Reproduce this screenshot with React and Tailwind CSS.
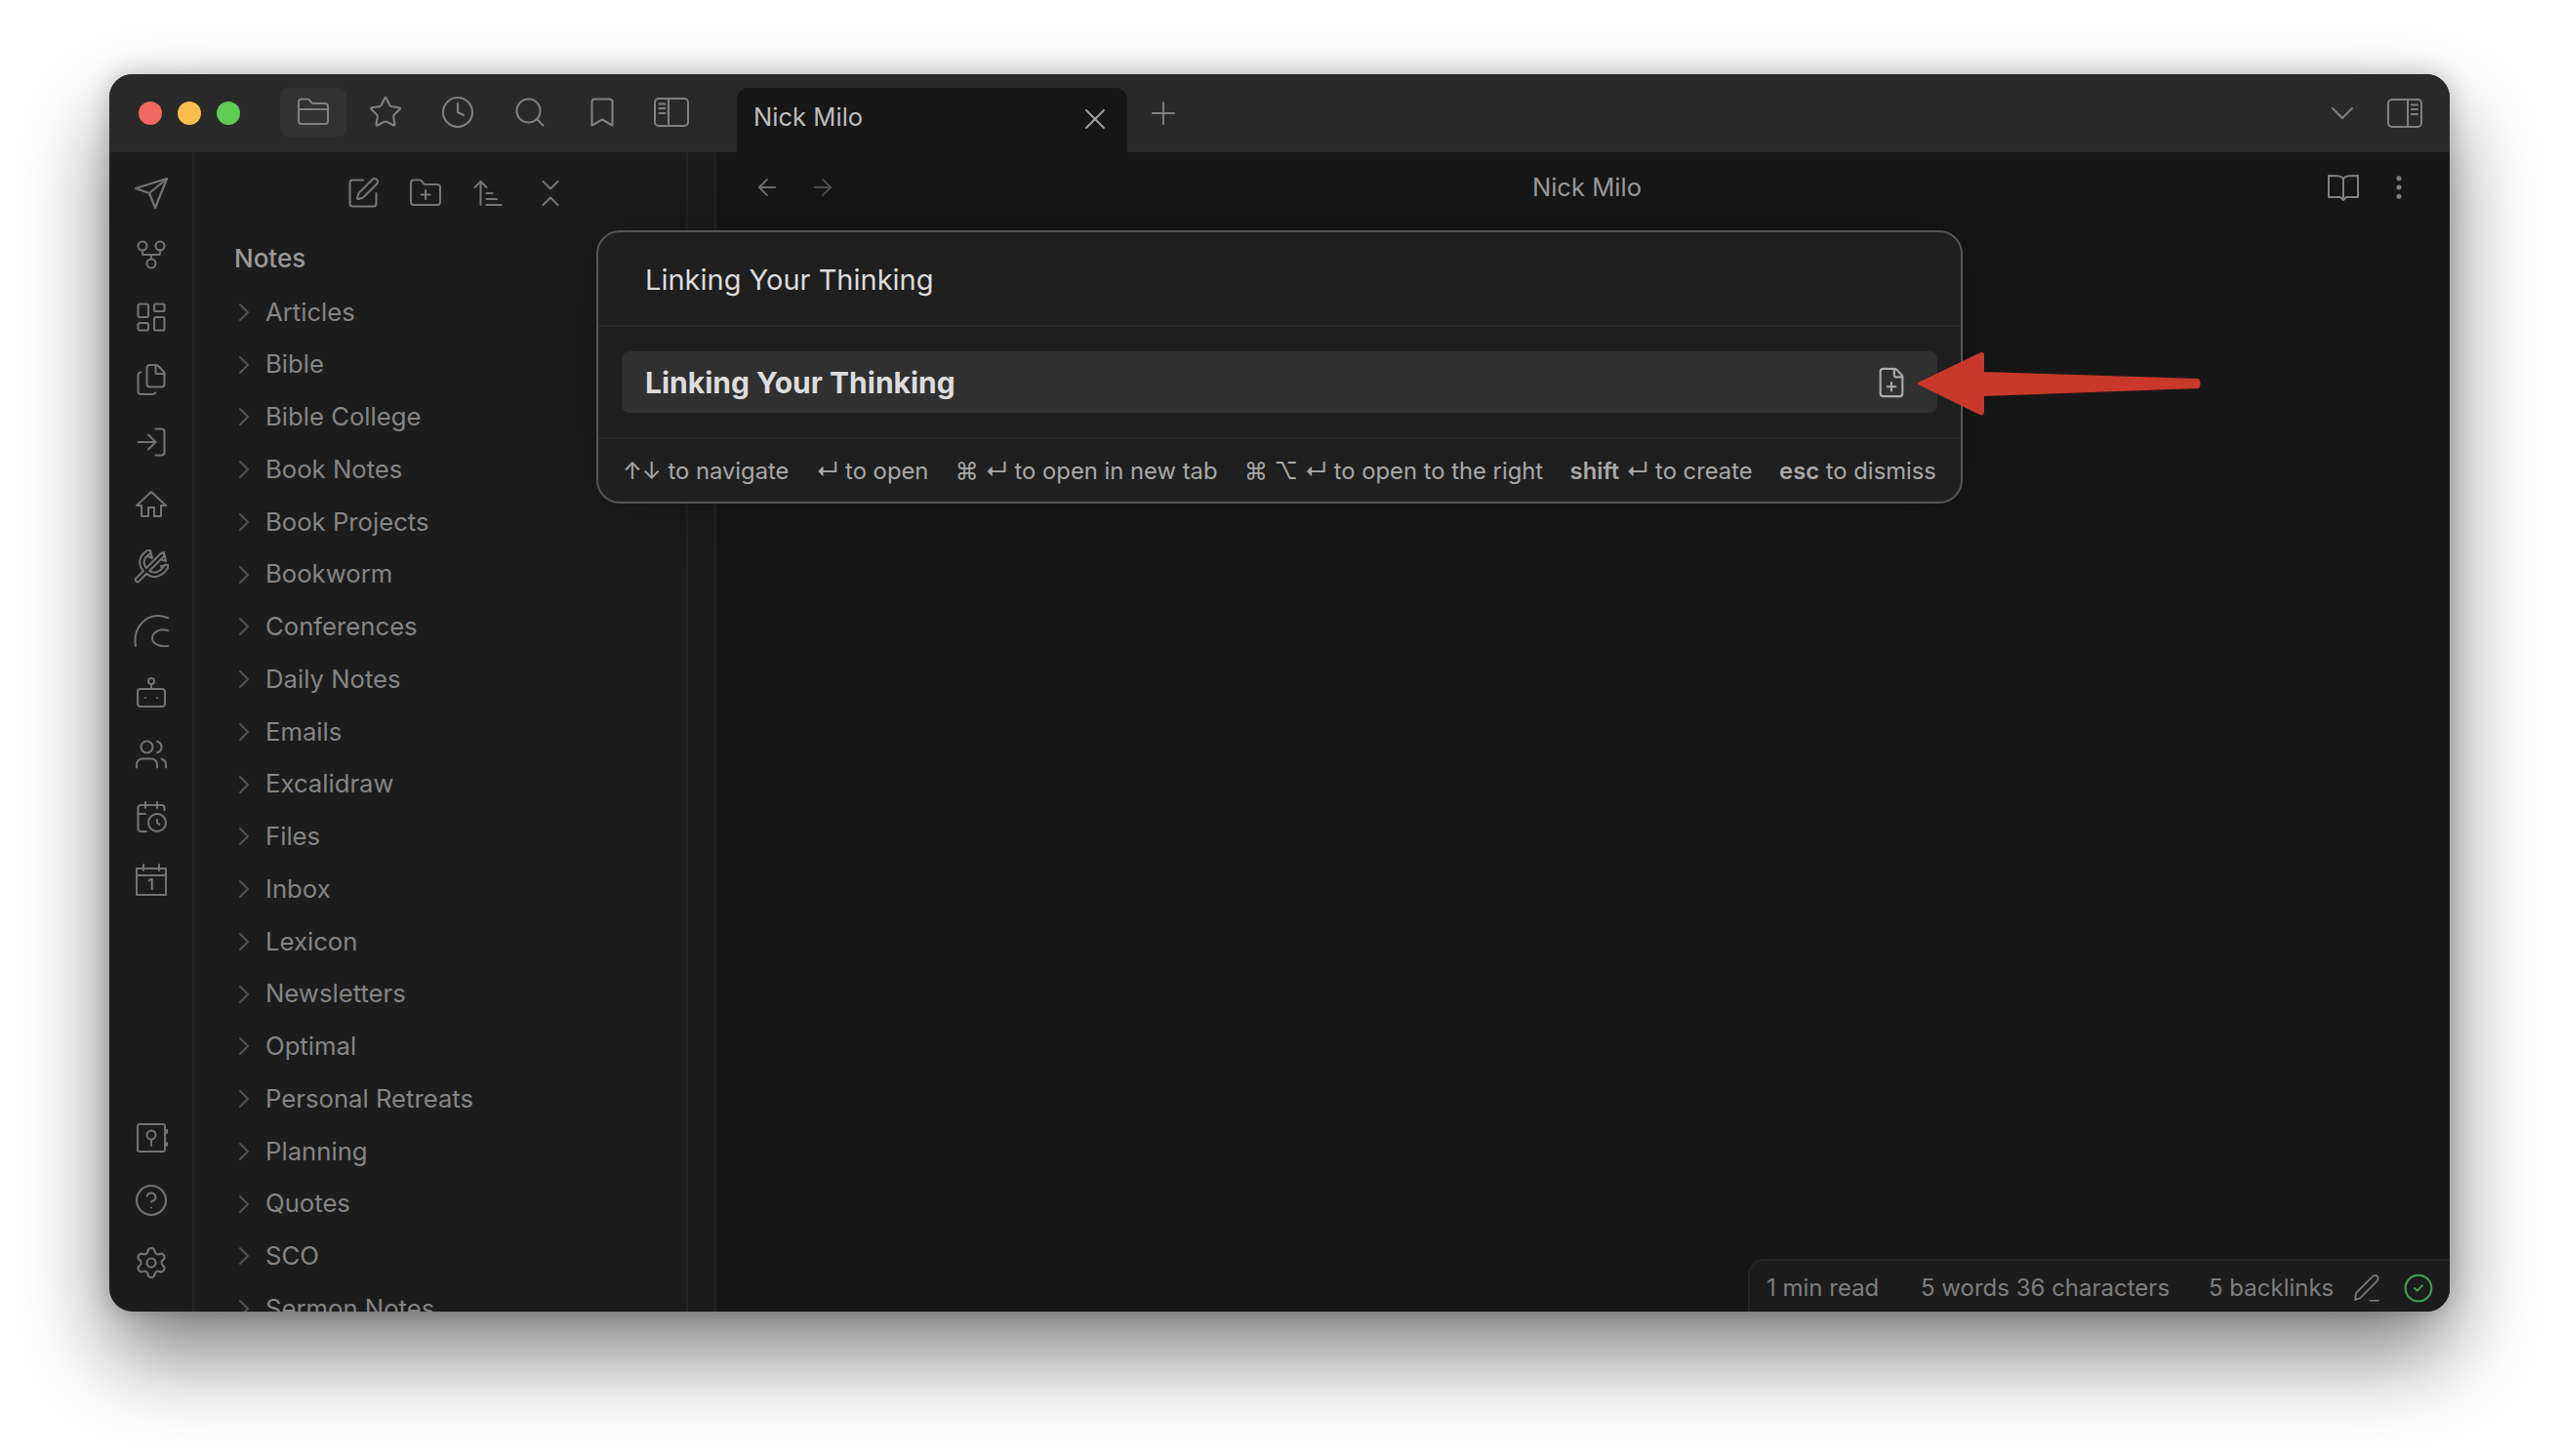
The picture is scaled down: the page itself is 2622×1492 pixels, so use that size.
import React from "react";
import {
  GitFork, LayoutDashboard, Files, LogIn, Users, CalendarClock, CircleHelp, Settings,
  FolderClosed, Star, Clock, Search, Bookmark, SquarePen, FolderPlus, ArrowUpNarrowWide,
  ChevronsDownUp, ChevronRight, ChevronDown, X, Plus, ArrowLeft, ArrowRight,
  EllipsisVertical, FilePlus, CircleCheck,
} from "lucide-react";

const folders = ["Articles","Bible","Bible College","Book Notes","Book Projects","Bookworm","Conferences","Daily Notes","Emails","Excalidraw","Files","Inbox","Lexicon","Newsletters","Optimal","Personal Retreats","Planning","Quotes","SCO","Sermon Notes"];

const Svg = ({ children, size = 36, stroke = 2 }) => (
  <svg width={size} height={size} viewBox="0 0 36 36" fill="none" stroke="currentColor" strokeWidth={stroke} strokeLinecap="round" strokeLinejoin="round">{children}</svg>
);

const Plane = () => <Svg stroke={2.2}><path d="M34 4 2 14l14 5 6 15L34 4Z" /><path d="M34 4 16 19" /></Svg>;
const House = () => <Svg><path d="M18 5 3 19h5v11h7v-9h6v9h7V19h5L18 5Z" /></Svg>;
const Trident = () => {
  const d = "M4 31 29 6M15 3C6 9 7 17 13 22C19 28 27 27 33 18";
  return (
    <Svg stroke={6.5}>
      <path d={d} />
      <path d="M10 5 17 1 19 9ZM24 9 31 3 33 12ZM28 17 35 16 31 24Z" strokeWidth="2" />
      <path d={d} stroke="#1c1c1c" strokeWidth="2.4" />
    </Svg>
  );
};
const Curve = () => (
  <Svg>
    <path d="M2 35C-1 18 10 4 25 4C29 4 32 5 35 6" />
    <path d="M35 19C28 17 19 20 19 27C19 33 27 36 35 35" />
  </Svg>
);
const Bot = () => (
  <Svg>
    <rect x="4" y="15" width="28" height="18" rx="3" />
    <circle cx="18" cy="7" r="3" />
    <path d="M18 10v5M12 24v.1M24 24v.1" />
  </Svg>
);
const DayCal = () => (
  <div className="relative">
    <Svg>
      <path d="M3 7h30v27H3zM3 14h30M10 3v6M26 3v6" />
    </Svg>
    <span className="absolute left-0 right-0 top-[13px] text-center text-[16px] leading-[20px] font-medium text-[#808080]">1</span>
  </div>
);
const Vault = () => (
  <Svg>
    <rect x="4" y="4" width="28" height="28" rx="2" />
    <circle cx="18" cy="15" r="4.5" />
    <path d="M18 20v6M34 10v3M34 23v3" />
  </Svg>
);
const LeftPanel = () => (
  <Svg>
    <rect x="1" y="4" width="34" height="28" rx="4" />
    <path d="M15 4v28M5.5 9.5h6M5.5 14h6M5.5 19h6" />
  </Svg>
);
const RightPanel = () => (
  <Svg>
    <rect x="1" y="4" width="34" height="28" rx="4" />
    <path d="M21 4v28M25 9.5h6M25 14h6M25 19h6" />
  </Svg>
);
const Book = () => (
  <Svg>
    <path d="M18 9C16 6 12 6 3 6V28H15L18 31L21 28H33V6C24 6 20 6 18 9ZM18 9V28" />
  </Svg>
);
const Pen = () => (
  <Svg stroke={2}>
    <path d="M4 32l1-8L25 4c2-2 5-2 6 0s1 4-1 6L10 30l-6 2Z" />
    <path d="M22 33h10" />
  </Svg>
);

const RibbonIcon = ({ children }) => (
  <div className="h-[64px] w-full flex items-center justify-center text-[#737373]">{children}</div>
);
const TopBtn = ({ children, active, className = "" }) => (
  <div className={`w-[68px] h-[50px] flex items-center justify-center rounded-[8px] text-[#808080] ${active ? "bg-[#323232]" : ""} ${className}`}>{children}</div>
);
const Key = ({ children }) => <span className="font-semibold">{children}</span>;

export default function App() {
  const ic = { size: 36, strokeWidth: 1.4 };
  return (
    <div className="w-[2622px] h-[1492px] overflow-hidden bg-white pl-[112px] pt-[76px] font-[Inter,sans-serif]">
      <div className="relative w-[2398px] h-[1268px] rounded-[24px] overflow-hidden bg-[#1c1c1c] flex flex-col shadow-[0_44px_90px_rgba(0,0,0,0.5),0_0_24px_rgba(0,0,0,0.22)]">
        <div className="h-[80px] shrink-0 bg-[#292929] flex">
          <div className="flex items-center gap-[16px] pl-[30px] mt-[28px] h-[24px]">
            <div className="w-[24px] h-[24px] rounded-full bg-[#f0685f]" />
            <div className="w-[24px] h-[24px] rounded-full bg-[#f7be4b]" />
            <div className="w-[24px] h-[24px] rounded-full bg-[#5fcb55]" />
          </div>
          <div className="flex gap-[6px] ml-[41px] mt-[14px] h-[50px]">
            <TopBtn active><FolderClosed {...ic} /></TopBtn>
            <TopBtn><Star {...ic} /></TopBtn>
            <TopBtn><Clock {...ic} /></TopBtn>
            <TopBtn><Search {...ic} /></TopBtn>
            <TopBtn><Bookmark {...ic} /></TopBtn>
            <TopBtn className="-ml-[3px]"><LeftPanel /></TopBtn>
          </div>
          <div className="ml-[33px] mt-[14px] w-[400px] h-[66px] rounded-t-[12px] bg-[#171717] flex items-center justify-between pl-[17px] pr-[15px] pb-[5px] text-[25.6px] text-[#bdbdbd]">
            <span>Nick Milo</span>
            <X size={36} strokeWidth={1.3} className="text-[#a0a0a0] mt-[2px]" />
          </div>
          <div className="ml-[18px] mt-[21px] h-[38px] text-[#808080]"><Plus size={38} strokeWidth={1.2} /></div>
          <div className="ml-auto mt-[22px] h-[36px] mr-[28px] flex items-center gap-[26px] text-[#808080]">
            <ChevronDown size={40} strokeWidth={1.2} />
            <RightPanel />
          </div>
        </div>

        <div className="flex-1 flex min-h-0">
          <div className="w-[87px] shrink-0 border-r-2 border-[#242424] flex flex-col justify-between pt-[9px] pb-[18px]">
            <div>
              <RibbonIcon><Plane /></RibbonIcon>
              <RibbonIcon><GitFork {...ic} /></RibbonIcon>
              <RibbonIcon><LayoutDashboard {...ic} /></RibbonIcon>
              <RibbonIcon><Files {...ic} /></RibbonIcon>
              <RibbonIcon><LogIn {...ic} /></RibbonIcon>
              <RibbonIcon><House /></RibbonIcon>
              <RibbonIcon><Trident /></RibbonIcon>
              <RibbonIcon><Curve /></RibbonIcon>
              <RibbonIcon><Bot /></RibbonIcon>
              <RibbonIcon><Users {...ic} /></RibbonIcon>
              <RibbonIcon><CalendarClock {...ic} /></RibbonIcon>
              <RibbonIcon><DayCal /></RibbonIcon>
            </div>
            <div>
              <RibbonIcon><Vault /></RibbonIcon>
              <RibbonIcon><CircleHelp {...ic} /></RibbonIcon>
              <RibbonIcon><Settings {...ic} /></RibbonIcon>
            </div>
          </div>

          <div className="w-[506px] shrink-0 border-r-2 border-[#242424] overflow-hidden">
            <div className="h-[84px] flex items-center justify-center gap-[28px] pl-[34px] text-[#767676]">
              <SquarePen {...ic} />
              <FolderPlus {...ic} />
              <ArrowUpNarrowWide {...ic} />
              <ChevronsDownUp {...ic} />
            </div>
            <div className="h-[51px] pl-[41px] pb-[2px] flex items-center text-[26px] font-medium text-[#9a9a9a]">Notes</div>
            {folders.map((f, i) => (
              <div key={f} className={`h-[53.75px] pl-[35px] flex items-center text-[25.7px] text-[#858585] ${i === 0 ? "mt-[2px]" : ""}`}>
                <ChevronRight size={32} strokeWidth={1.5} className="text-[#525252] shrink-0" />
                <span className="ml-[6px] whitespace-nowrap">{f}</span>
              </div>
            ))}
          </div>
          <div className="w-[29px] shrink-0 border-r-2 border-[#242424]" />

          <div className="flex-1 bg-[#171717] flex flex-col">
            <div className="h-[72px] flex items-center">
              <div className="flex items-center gap-[29px] pl-[38px] text-[#707070]">
                <ArrowLeft size={28} strokeWidth={1.6} />
                <ArrowRight size={28} strokeWidth={1.6} className="text-[#505050]" />
              </div>
              <div className="flex-1 text-center text-[25.6px] text-[#9c9c9c] pl-[12px] pt-[1px]">Nick Milo</div>
              <div className="flex items-center gap-[23px] pr-[36px] text-[#808080]">
                <Book />
                <EllipsisVertical size={32} strokeWidth={1.8} />
              </div>
            </div>
          </div>
        </div>

        <div className="absolute left-[499px] top-[160px] w-[1400px] h-[280px] rounded-[24px] border-2 border-[#555555] bg-[#1f1f1f] flex flex-col shadow-[0_0_60px_rgba(0,0,0,0.35)]">
          <div className="h-[97px] shrink-0 border-b-2 border-[#2a2a2a] pl-[48px] pt-[3px] flex items-center text-[29px] text-[#dcdcdc]">Linking Your Thinking</div>
          <div className="h-[115px] shrink-0 border-b-2 border-[#2a2a2a] px-[24px] flex items-center">
            <div className="w-full h-[63px] rounded-[8px] bg-[#303030] pl-[24px] pr-[30px] flex items-center justify-between text-[30px] font-bold text-[#dcdcdc]">
              <span className="pt-[1px]">Linking Your Thinking</span>
              <FilePlus size={34} strokeWidth={1.5} className="text-[#ababab]" />
            </div>
          </div>
          <div className="flex-1 flex items-center justify-between pl-[25px] pr-[25px] pt-[2px] text-[23.8px] text-[#a8a8a8]">
            <span>↑↓ to navigate</span>
            <span>↵ to open</span>
            <span>⌘ ↵ to open in new tab</span>
            <span>⌘ ⌥ ↵ to open to the right</span>
            <span><Key>shift</Key> ↵ to create</span>
            <span><Key>esc</Key> to dismiss</span>
          </div>
        </div>

        <svg className="absolute left-[1848px] top-[280px]" width="300" height="74" viewBox="0 0 300 74">
          <path d="M6 37 70 6c1 0 2 1 2 2l0 18 220 7c2 1 2 7 0 8L72 49l0 17c0 2-2 3-3 2Z" fill="#c8392b" stroke="#c8392b" strokeWidth="2" strokeLinejoin="round" />
        </svg>

        <div className="absolute right-0 bottom-0 w-[719px] h-[54px] rounded-tl-[16px] border-l-2 border-t-2 border-[#262626] bg-[#1c1c1c] flex items-center pl-[17px] pt-[3px] text-[24px] text-[#7e7e7e] whitespace-nowrap">
          <span className="w-[158px] shrink-0">1 min read</span>
          <span className="w-[295px] shrink-0">5 words 36 characters</span>
          <span className="w-[146px] shrink-0">5 backlinks</span>
          <span className="w-[32px] h-[32px] shrink-0 flex items-center justify-center"><span className="scale-[0.85]"><Pen /></span></span>
          <CircleCheck size={32} strokeWidth={1.5} className="ml-[21px] shrink-0 text-[#43a152]" />
        </div>
      </div>
    </div>
  );
}
